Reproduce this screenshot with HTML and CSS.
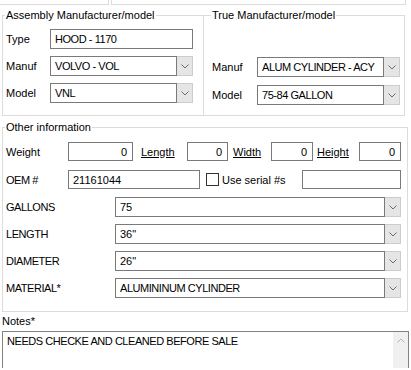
FILE: index.html
```html
<!DOCTYPE html>
<html>
<head>
<meta charset="utf-8">
<link rel="stylesheet" href="styles.css">
</head>
<body>
<div class="prev">
  <div class="prev-a"></div>
  <div class="prev-b"></div>
</div>
<div class="top">
  <fieldset class="grp grp-asm">
    <legend>Assembly Manufacturer/model</legend>
    <div class="row">
      <span class="lbl lbl-asm">Type</span>
      <div class="tb w143 uc">HOOD - 1170</div>
    </div>
    <div class="row">
      <span class="lbl lbl-asm">Manuf</span>
      <div class="combo w143"><div class="cb-text uc">VOLVO - VOL</div><div class="cb-btn"><svg width="8" height="5" viewBox="0 0 8 5"><polyline points="0.5,0.5 4,4 7.5,0.5" fill="none" stroke="#6d6d6d" stroke-width="1"/></svg></div></div>
    </div>
    <div class="row">
      <span class="lbl lbl-asm">Model</span>
      <div class="combo w143"><div class="cb-text uc">VNL</div><div class="cb-btn"><svg width="8" height="5" viewBox="0 0 8 5"><polyline points="0.5,0.5 4,4 7.5,0.5" fill="none" stroke="#6d6d6d" stroke-width="1"/></svg></div></div>
    </div>
  </fieldset>
  <fieldset class="grp grp-true">
    <legend>True Manufacturer/model</legend>
    <div class="row">
      <span class="lbl lbl-true">Manuf</span>
      <div class="combo w143"><div class="cb-text uc">ALUM CYLINDER - ACY</div><div class="cb-btn"><svg width="8" height="5" viewBox="0 0 8 5"><polyline points="0.5,0.5 4,4 7.5,0.5" fill="none" stroke="#6d6d6d" stroke-width="1"/></svg></div></div>
    </div>
    <div class="row">
      <span class="lbl lbl-true">Model</span>
      <div class="combo w143"><div class="cb-text uc">75-84 GALLON</div><div class="cb-btn"><svg width="8" height="5" viewBox="0 0 8 5"><polyline points="0.5,0.5 4,4 7.5,0.5" fill="none" stroke="#6d6d6d" stroke-width="1"/></svg></div></div>
    </div>
  </fieldset>
</div>

<fieldset class="grp grp-other">
  <legend>Other information</legend>
  <div class="row row19">
    <span class="lbl lbl-oth">Weight</span>
    <div class="tb num w65">0</div>
    <span class="link l-length">Length</span>
    <div class="tb num w41">0</div>
    <span class="link l-width">Width</span>
    <div class="tb num w42">0</div>
    <span class="link l-height">Height</span>
    <div class="tb num w42">0</div>
  </div>
  <div class="row row19 row-oem">
    <span class="lbl lbl-oth uc">OEM #</span>
    <div class="tb w132">21161044</div>
    <span class="chk"></span>
    <span class="chk-lbl">Use serial #s</span>
    <div class="tb w99 push"></div>
  </div>
  <div class="combos">
    <div class="row">
      <span class="lbl lbl-cmb uc">GALLONS</span>
      <div class="combo wfull"><div class="cb-text">75</div><div class="cb-btn"><svg width="8" height="5" viewBox="0 0 8 5"><polyline points="0.5,0.5 4,4 7.5,0.5" fill="none" stroke="#6d6d6d" stroke-width="1"/></svg></div></div>
    </div>
    <div class="row">
      <span class="lbl lbl-cmb uc">LENGTH</span>
      <div class="combo wfull"><div class="cb-text">36"</div><div class="cb-btn"><svg width="8" height="5" viewBox="0 0 8 5"><polyline points="0.5,0.5 4,4 7.5,0.5" fill="none" stroke="#6d6d6d" stroke-width="1"/></svg></div></div>
    </div>
    <div class="row">
      <span class="lbl lbl-cmb uc">DIAMETER</span>
      <div class="combo wfull"><div class="cb-text">26"</div><div class="cb-btn"><svg width="8" height="5" viewBox="0 0 8 5"><polyline points="0.5,0.5 4,4 7.5,0.5" fill="none" stroke="#6d6d6d" stroke-width="1"/></svg></div></div>
    </div>
    <div class="row">
      <span class="lbl lbl-cmb uc">MATERIAL*</span>
      <div class="combo wfull"><div class="cb-text uc">ALUMININUM CYLINDER</div><div class="cb-btn"><svg width="8" height="5" viewBox="0 0 8 5"><polyline points="0.5,0.5 4,4 7.5,0.5" fill="none" stroke="#6d6d6d" stroke-width="1"/></svg></div></div>
    </div>
  </div>
</fieldset>

<div class="notes-lbl">Notes*</div>
<div class="notes">
  <div class="notes-text uc">NEEDS CHECKE AND CLEANED BEFORE SALE</div>
  <div class="sbar"><svg width="8" height="5" viewBox="0 0 8 5"><polyline points="0.5,4.5 4,1 7.5,4.5" fill="none" stroke="#b4b4b4" stroke-width="1"/></svg></div>
</div>
</body>
</html>
```
FILE: styles.css
```css
* { box-sizing: border-box; }
html, body { margin: 0; padding: 0; background: #fff; }
body {
  font-family: "Liberation Sans", Arial, sans-serif;
  font-size: 11px;
  color: #000;
  width: 411px;
  height: 370px;
  overflow: hidden;
}
.uc { letter-spacing: -0.45px; }
.prev { display: flex; height: 5px; }
.prev-a { width: 109px; border-bottom: 1px solid #dcdcdc; border-right: 1px solid #dcdcdc; }
.prev-b { width: 295px; margin-left: 2px; border-bottom: 1px solid #dcdcdc; border-left: 1px solid #dcdcdc; border-right: 1px solid #dcdcdc; }

.grp {
  margin: 0;
  border: 1px solid #dcdcdc;
  min-width: 0;
}
.grp legend {
  padding: 0 1px;
  margin-left: -1px;
  line-height: 14px;
  font-size: 11px;
}
.top { display: flex; margin-left: 2px; width: 403px; }
.grp-asm {
  width: 201px;
  margin-top: 3px;
  border-right: none;
  padding: 7px 0 12px 3px;
  display: flex; flex-direction: column; gap: 7px;
}
.grp-true {
  flex: 1;
  margin-top: 3px;
  padding: 0 0 10px 8px;
  display: flex; flex-direction: column; justify-content: flex-end; gap: 8px;
}
.row { display: flex; align-items: center; height: 20px; }
.row19 { height: 19px; }
.lbl { display: inline-block; }
.lbl-asm { width: 44px; }
.lbl-true { width: 45px; }
.lbl-oth { width: 62px; }
.lbl-cmb { width: 109px; }

.tb {
  height: 100%;
  border: 1px solid #7a7a7a;
  padding: 0 4px;
  display: flex; align-items: center;
  white-space: nowrap; overflow: hidden;
}
.tb.num { justify-content: flex-end; padding-right: 5px; }
.w143 { width: 143px; }
.w65 { width: 65px; }
.w41 { width: 41px; }
.w42 { width: 42px; }
.w132 { width: 132px; }
.w99 { width: 99px; }
.wfull { width: 286px; }
.push { margin-left: auto; }

.combo { height: 20px; display: flex; }
.cb-text {
  flex: 1;
  border: 1px solid #7a7a7a;
  padding: 0 4px;
  display: flex; align-items: center;
  white-space: nowrap; overflow: hidden;
}
.cb-btn {
  width: 16px;
  background: #e5e5e5;
  border: 1px solid #cccccc;
  border-left: none;
  display: flex; align-items: center; justify-content: center;
}

.grp-other {
  margin: 4px 0 0 2px;
  width: 406px;
  padding: 8px 6px 13px 3px;
}
.link { text-decoration: underline; display: inline-block; }
.l-length { margin-left: 8px; width: 46px; }
.l-width { margin-left: 5px; width: 38px; }
.l-height { margin-left: 4px; width: 42px; }
.row-oem { margin-top: 9px; }
.chk {
  width: 13px; height: 13px;
  border: 1px solid #333;
  margin-left: 6px;
  background: #fff;
}
.chk-lbl { margin-left: 3px; }
.combos { margin-top: 8px; display: flex; flex-direction: column; gap: 7px; }

.notes-lbl { margin: 2px 0 0 2px; line-height: 14px; }
.notes {
  margin: 3px 0 0 2px;
  width: 407px;
  height: 37px;
  border: 1px solid #828282;
  border-bottom: none;
  display: flex;
}
.notes-text { flex: 1; padding: 3px 0 0 4px; }
.sbar {
  width: 15px;
  background: #f0f0f0;
  display: flex; justify-content: center; align-items: flex-start;
  padding-top: 6px;
}
```
